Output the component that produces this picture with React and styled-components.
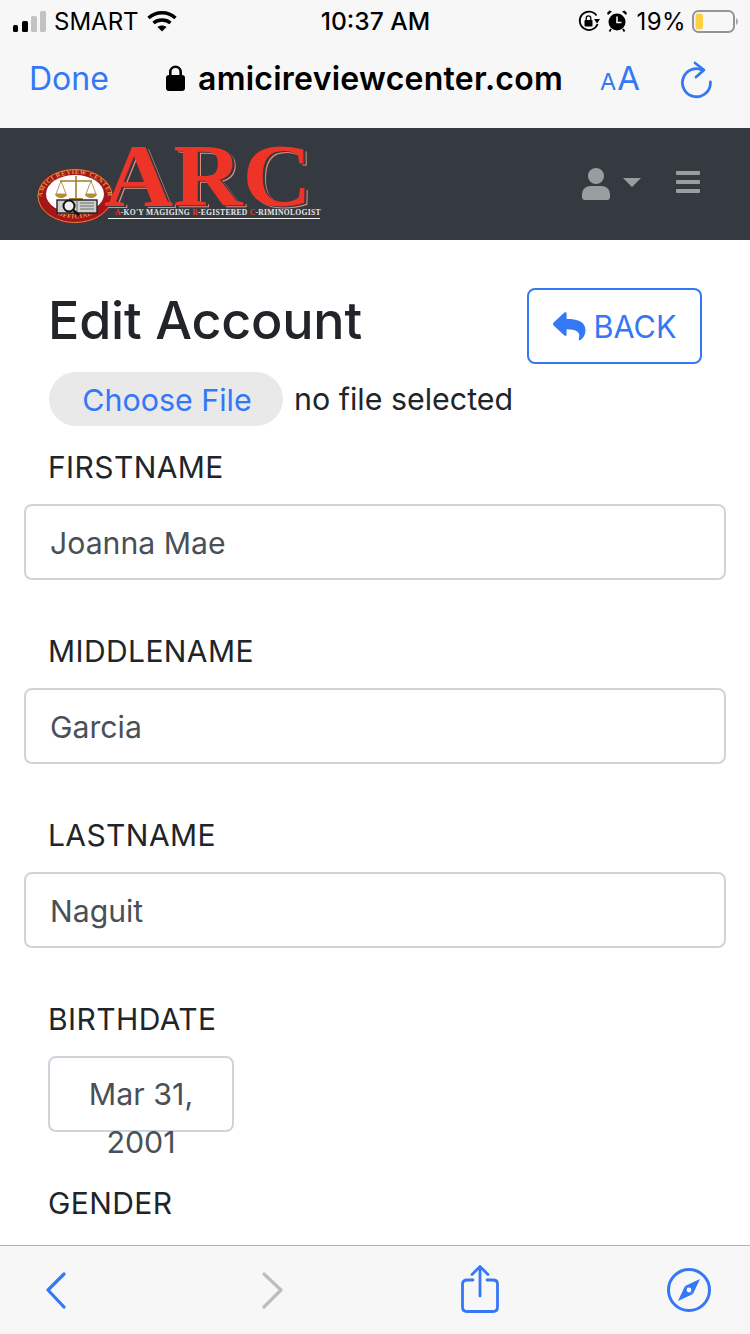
import React from 'react';
import styled, { createGlobalStyle } from 'styled-components';

const Global = createGlobalStyle`
    html, body {
        margin: 0;
        padding: 0;
        background: #fff;
    }
    * {
        box-sizing: border-box;
    }
`;

const Screen = styled.div`
    width: 750px;
    height: 1334px;
    display: flex;
    flex-direction: column;
    overflow: hidden;
    font-family: Inter, "Liberation Sans", sans-serif;
    color: #212529;
`;

const StatusBar = styled.div`
    height: 40px;
    flex: none;
    display: grid;
    grid-template-columns: 1fr auto 1fr;
    align-items: center;
    padding: 2px 12px 0 13px;
    background: #f7f7f7;
    color: #000;
    font-size: 24px;
`;

const StatusSide = styled.div`
    display: flex;
    align-items: center;
    gap: ${p => p.$gap || 8}px;
    justify-content: ${p => p.$end ? 'flex-end' : 'flex-start'};
`;

const Percent = styled.span`
    letter-spacing: 0.4px;
    margin-left: 3px;
    margin-right: -1px;
`;

const Clock = styled.div`
    font-weight: 500;
    font-size: 24.6px;
`;

const Toolbar = styled.div`
    height: 88px;
    flex: none;
    display: flex;
    align-items: flex-start;
    padding: 19px 36px 0 29px;
    background: #f7f7f7;
    color: #3478f6;
`;

const Done = styled.div`
    font-size: 32px;
    line-height: 38px;
    width: 137px;
    margin-top: 1px;
`;

const Address = styled.div`
    display: flex;
    align-items: center;
    gap: 13px;
    flex: 1;
    height: 38px;
    color: #000;
    font-size: 32px;
    font-weight: 600;
    letter-spacing: 0.25px;
`;

const AaMark = styled.div`
    display: flex;
    align-items: baseline;
    gap: 1px;
    margin-right: 40px;
    font-size: 33px;
    line-height: 38px;
    small {
        font-size: 23.5px;
    }
`;

const ReloadSvg = styled.svg`
    margin-top: 1px;
`;

const Navbar = styled.div`
    height: 112px;
    flex: none;
    display: flex;
    align-items: center;
    padding: 0 50px 0 36px;
    background: #343a40;
`;

const Logo = styled.div`
    height: 76px;
    display: flex;
    margin-right: auto;
    margin-top: -5px;
`;

const SealSvg = styled.svg`
    flex: none;
    margin-top: 24px;
`;

const LogoWords = styled.div`
    display: flex;
    flex-direction: column;
    align-items: flex-start;
    margin-left: -10px;
    position: relative;
`;

const LogoTitle = styled.div`
    font-family: "Liberation Serif", serif;
    font-weight: 700;
    font-size: 88px;
    line-height: 64px;
    height: 64px;
    color: #ee3426;
    transform: scaleX(1.09);
    transform-origin: left;
    text-shadow: 2px 1px 0 #343a40, 3px 2px 0 #e58a80;
`;

const LogoSub = styled.div`
    font-family: "Liberation Serif", serif;
    font-weight: 700;
    font-size: 7.6px;
    line-height: 9px;
    margin-left: 4px;
    padding: 0 0 1px 7px;
    width: 212px;
    white-space: nowrap;
    color: #e8e8e8;
    border-bottom: 1px solid #f4f4f4;
    letter-spacing: 0.28px;
    b {
        color: #ee3426;
    }
`;

const NavIcons = styled.div`
    display: flex;
    align-items: center;
    margin-top: -4px;
`;

const UserSvg = styled.svg`
    margin-top: 4px;
`;

const Caret = styled.div`
    width: 0;
    height: 0;
    margin: 0 35px 0 13px;
    border-left: 9px solid transparent;
    border-right: 9px solid transparent;
    border-top: 9px solid rgba(255, 255, 255, 0.5);
`;

const Main = styled.div`
    flex: 1;
    min-height: 0;
    overflow: hidden;
    padding: 48px 24px 0;
`;

const HeadRow = styled.div`
    display: flex;
    justify-content: space-between;
    align-items: flex-start;
    padding: 0 24px 0 24px;
    height: 84px;
`;

const Title = styled.h1`
    margin: 0;
    font-size: 52px;
    line-height: 66px;
    font-weight: 500;
    letter-spacing: -0.2px;
`;

const BackButton = styled.div`
    width: 175px;
    height: 76px;
    display: flex;
    align-items: center;
    justify-content: center;
    gap: 8px;
    padding-top: 1px;
    border: 2px solid #3478f6;
    border-radius: 8px;
    color: #3478f6;
    font-size: 30.6px;
`;

const FileRow = styled.div`
    display: flex;
    align-items: center;
    gap: 11px;
    height: 54px;
    padding-left: 25px;
    font-size: 30.4px;
`;

const FilePill = styled.div`
    width: 234px;
    height: 54px;
    padding: 2px 0 0 2px;
    border-radius: 27px;
    display: flex;
    align-items: center;
    justify-content: center;
    background: #e9e9ea;
    color: #3478f6;
`;

const Label = styled.div`
    margin: ${p => p.$top || 0}px 0 0 24px;
    font-size: 30px;
    line-height: 46px;
    height: 46px;
    letter-spacing: 0.4px;
`;

const Field = styled.div`
    height: 76px;
    margin: 14px 0 0;
    padding: 2px 24px 0;
    display: flex;
    align-items: center;
    border: 2px solid #ced4da;
    border-radius: 8px;
    color: #495057;
    font-size: 30.2px;
`;

const DateField = styled.div`
    width: 186px;
    height: 76px;
    margin: 14px 0 0 24px;
    border: 2px solid #ced4da;
    border-radius: 8px;
    color: #495057;
    font-size: 30.4px;
    line-height: 48px;
    text-align: center;
    padding: 12px 0 0;
`;

const BottomBar = styled.div`
    height: 89px;
    flex: none;
    display: grid;
    grid-template-columns: repeat(4, 1fr);
    align-items: center;
    background: #f7f7f8;
    border-top: 1px solid #b4b4b4;
    svg {
        display: block;
    }
`;

const BarSlot = styled.div`
    display: flex;
    justify-content: center;
    transform: translate(${p => p.$nudge}px, ${p => p.$lift || 0}px);
`;

const BLUE = '#3478f6';

const Signal = () => (
    <svg width="33" height="21" viewBox="0 0 33 21">
        <rect x="0" y="14" width="5" height="7" rx="1.5" fill="#000" />
        <rect x="9" y="10" width="6" height="11" rx="1.5" fill="#000" />
        <rect x="18" y="5" width="6" height="16" rx="1.5" fill="#c2c2c2" />
        <rect x="27" y="0" width="6" height="21" rx="1.5" fill="#c2c2c2" />
    </svg>
);

const Wifi = () => (
    <svg width="30" height="22" viewBox="0 0 30 22" fill="none" stroke="#000" strokeWidth="3.4">
        <path d="M1.5 8 C9 1 21 1 28.5 8" />
        <path d="M6.5 13 C11 9 19 9 23.5 13" />
        <path d="M15 21.5 L10.5 17 C13 15 17 15 19.5 17 Z" fill="#000" stroke="none" />
    </svg>
);

const RotationLock = () => (
    <svg width="22" height="22" viewBox="0 0 22 22" fill="none">
        <path d="M19.6 14 A9.2 9.2 0 1 1 18.5 5.5" stroke="#000" strokeWidth="1.8" />
        <path d="M16 9 L22 9 L19 13.5 Z" fill="#000" />
        <rect x="6.5" y="10" width="8" height="6.5" rx="1" fill="#000" />
        <path d="M8.2 10.5 V8.2 a2.3 2.3 0 0 1 4.6 0 V10.5" stroke="#000" strokeWidth="1.3" />
    </svg>
);

const Alarm = () => (
    <svg width="20" height="22" viewBox="0 0 20 22">
        <circle cx="10" cy="12" r="8.5" fill="#000" />
        <path d="M1 5 L5 1.5 L2.5 .5 L0 3 Z M19 5 L15 1.5 L17.5 .5 L20 3 Z" fill="#000" />
        <path d="M10 6.5 V12.5 H14.5" stroke="#f7f7f7" strokeWidth="1.6" fill="none" />
        <path d="M4 19 L2.5 21.5 M16 19 L17.5 21.5" stroke="#000" strokeWidth="1.8" />
    </svg>
);

const Battery = () => (
    <svg width="46" height="23" viewBox="0 0 46 23">
        <rect x="1" y="1" width="41" height="21" rx="5.5" fill="none" stroke="#959595" strokeWidth="2" />
        <rect x="3.5" y="3.5" width="7.5" height="16" rx="3" fill="#fcd040" />
        <path d="M44 8 C45.5 9 46 10 46 11.5 C46 13 45.5 14 44 15 Z" fill="#a8a8a8" />
    </svg>
);

const Lock = () => (
    <svg width="19" height="26" viewBox="0 0 19 26">
        <rect x="0" y="10" width="19" height="16" rx="3" fill="#000" />
        <path d="M4.3 11 V7 a5.2 5.2 0 0 1 10.4 0 V11" fill="none" stroke="#000" strokeWidth="2.6" />
    </svg>
);

const Reload = () => (
    <ReloadSvg width="34" height="40" viewBox="0 0 34 40" fill="none" stroke={BLUE} strokeWidth="2.8" strokeLinecap="round" strokeLinejoin="round">
        <path d="M23 10.4 A14 14 0 1 0 30.4 22" />
        <path d="M15 3 L24 10 L16 17" />
    </ReloadSvg>
);

const LogoSeal = () => (
    <SealSvg width="78" height="56" viewBox="0 0 78 56">
        <defs>
            <path id="sealTop" d="M6 30 A33 24 0 0 1 72 30" />
            <path id="sealBottom" d="M14 42 A33 24 0 0 0 64 42" />
        </defs>
        <ellipse cx="39" cy="28" rx="38" ry="27.5" fill="#a5161a" />
        <ellipse cx="39" cy="28" rx="37" ry="26.5" fill="none" stroke="#d8a24a" strokeWidth=".8" />
        <text fontFamily="Liberation Serif, serif" fontSize="6.4" fontWeight="700" fill="#d8a24a" letterSpacing=".6">
            <textPath href="#sealTop" startOffset="50%" textAnchor="middle">AMICI REVIEW CENTER</textPath>
        </text>
        <text fontFamily="Liberation Serif, serif" fontSize="6.4" fontWeight="700" fill="#d8a24a" letterSpacing=".6">
            <textPath href="#sealBottom" startOffset="50%" textAnchor="middle">OFFICIAL</textPath>
        </text>
        <ellipse cx="39" cy="26" rx="29" ry="19" fill="#fff" />
        <path d="M40 8 V32 M24 13 H56" stroke="#a27d2c" strokeWidth="1.6" />
        <path d="M25 13 L20 26 H30 Z M55 13 L50 26 H60 Z" fill="none" stroke="#a27d2c" strokeWidth=".8" />
        <path d="M19 26 a6 4 0 0 0 12 0 Z M49 26 a6 4 0 0 0 12 0 Z" fill="#b58b35" />
        <path d="M34 33 H46 L47 30 H33 Z" fill="#a27d2c" />
        <rect x="21" y="32" width="40" height="13" fill="#cfcfcf" stroke="#222" strokeWidth="1.4" />
        <path d="M41 32 V45 M44 35 H58 M44 38 H58 M44 41 H58" stroke="#555" strokeWidth=".8" />
        <circle cx="33" cy="38" r="5.5" fill="#eee" stroke="#111" strokeWidth="2" />
        <path d="M37 42 L43 47" stroke="#111" strokeWidth="2.4" />
    </SealSvg>
);

const UserIcon = () => (
    <UserSvg width="28" height="32" viewBox="0 0 28 32" fill="rgba(255,255,255,0.5)">
        <circle cx="14" cy="8" r="8" />
        <path d="M0 27 C0 21 4 18 9 18 H19 C24 18 28 21 28 27 V29 C28 31 27 32 25 32 H3 C1 32 0 31 0 29 Z" />
    </UserSvg>
);

const MenuIcon = () => (
    <svg width="24" height="22" viewBox="0 0 24 22" fill="rgba(255,255,255,0.5)">
        <rect x="0" y="0" width="24" height="4" rx="1" />
        <rect x="0" y="9" width="24" height="4" rx="1" />
        <rect x="0" y="18" width="24" height="4" rx="1" />
    </svg>
);

const ReplyIcon = () => (
    <svg width="33" height="29" viewBox="0 0 33 29" fill={BLUE}>
        <path d="M0.6 10.6 L11.4 0.6 C12.3 -.1 13.6 .4 13.6 1.7 V7 C24 7 32.5 9 32.5 18.5 C32.5 22.4 30.4 26 27.5 28 C26.6 28.6 25.4 27.8 25.8 26.7 C27.5 21 25 17.5 13.6 17.3 V22.6 C13.6 23.8 12.3 24.4 11.4 23.6 L0.6 13.4 C-.2 12.6 -.2 11.4 .6 10.6 Z" />
    </svg>
);

const Chevron = ({ left, color }) => (
    <svg width="24" height="38" viewBox="0 0 24 38" fill="none" stroke={color} strokeWidth="3.2" strokeLinecap="round" strokeLinejoin="round">
        <path d={left ? 'M20 3 L4 19 L20 36' : 'M3 3 L20 19 L3 36'} />
    </svg>
);

const Share = () => (
    <svg width="38" height="48" viewBox="0 0 38 48" fill="none" stroke={BLUE} strokeWidth="2.8" strokeLinecap="round" strokeLinejoin="round">
        <path d="M12 15 H6 C3 15 1.5 16.5 1.5 19 V42 C1.5 45 3 46.5 6 46.5 H32 C35 46.5 36.5 45 36.5 42 V19 C36.5 16.5 35 15 32 15 H26" />
        <path d="M19 31 V2 M11 9.5 L19 1.5 L27 9.5" />
    </svg>
);

const Compass = () => (
    <svg width="44" height="44" viewBox="0 0 44 44">
        <circle cx="22" cy="22" r="20.5" fill="none" stroke={BLUE} strokeWidth="3" />
        <path d="M33 11 L26 26 L18 18 Z" fill={BLUE} />
        <path d="M11 33 L18 18 L26 26 Z" fill={BLUE} />
        <circle cx="22" cy="22" r="2.4" fill="#f7f7f8" />
    </svg>
);

const App = () => (
    <Screen>
        <Global />
        <StatusBar>
            <StatusSide>
                <Signal />
                <span>SMART</span>
                <Wifi />
            </StatusSide>
            <Clock>10:37 AM</Clock>
            <StatusSide $end $gap={7}>
                <RotationLock />
                <Alarm />
                <Percent>19%</Percent>
                <Battery />
            </StatusSide>
        </StatusBar>
        <Toolbar>
            <Done>Done</Done>
            <Address>
                <Lock />
                <span>amicireviewcenter.com</span>
            </Address>
            <AaMark><small>A</small>A</AaMark>
            <Reload />
        </Toolbar>
        <Navbar>
            <Logo>
                <LogoSeal />
                <LogoWords>
                    <LogoTitle>ARC</LogoTitle>
                    <LogoSub><b>A</b>-KO'Y MAGIGING <b>R</b>-EGISTERED <b>C</b>-RIMINOLOGIST</LogoSub>
                </LogoWords>
            </Logo>
            <NavIcons>
                <UserIcon />
                <Caret />
                <MenuIcon />
            </NavIcons>
        </Navbar>
        <Main>
            <HeadRow>
                <Title>Edit Account</Title>
                <BackButton><ReplyIcon />BACK</BackButton>
            </HeadRow>
            <FileRow>
                <FilePill>Choose File</FilePill>
                <span>no file selected</span>
            </FileRow>
            <Label $top={18}>FIRSTNAME</Label>
            <Field>Joanna Mae</Field>
            <Label $top={48}>MIDDLENAME</Label>
            <Field>Garcia</Field>
            <Label $top={48}>LASTNAME</Label>
            <Field>Naguit</Field>
            <Label $top={48}>BIRTHDATE</Label>
            <DateField>
                <div>Mar 31,</div>
                <div>2001</div>
            </DateField>
            <Label $top={48}>GENDER</Label>
        </Main>
        <BottomBar>
            <BarSlot $nudge={-38}><Chevron left color={BLUE} /></BarSlot>
            <BarSlot $nudge={-8}><Chevron color="#bdbdbd" /></BarSlot>
            <BarSlot $nudge={11} $lift={-1}><Share /></BarSlot>
            <BarSlot $nudge={33}><Compass /></BarSlot>
        </BottomBar>
    </Screen>
);

export default App;
